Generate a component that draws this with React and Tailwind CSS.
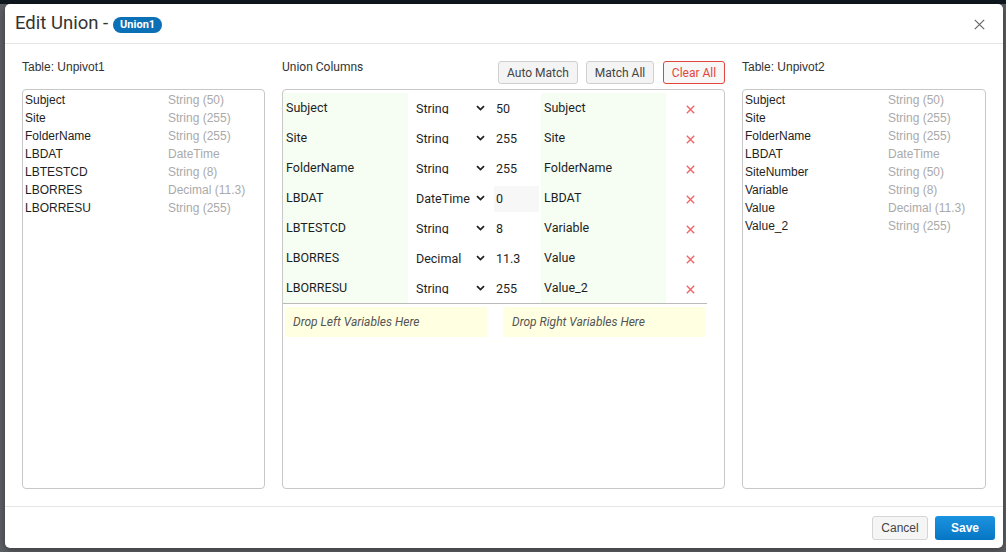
import { useState } from "react";

const leftCols = [
  ["Subject", "String (50)"],
  ["Site", "String (255)"],
  ["FolderName", "String (255)"],
  ["LBDAT", "DateTime"],
  ["LBTESTCD", "String (8)"],
  ["LBORRES", "Decimal (11.3)"],
  ["LBORRESU", "String (255)"],
];

const rightCols = [
  ["Subject", "String (50)"],
  ["Site", "String (255)"],
  ["FolderName", "String (255)"],
  ["LBDAT", "DateTime"],
  ["SiteNumber", "String (50)"],
  ["Variable", "String (8)"],
  ["Value", "Decimal (11.3)"],
  ["Value_2", "String (255)"],
];

const unionRows = [
  { left: "Subject", type: "String", len: "50", right: "Subject" },
  { left: "Site", type: "String", len: "255", right: "Site" },
  { left: "FolderName", type: "String", len: "255", right: "FolderName" },
  { left: "LBDAT", type: "DateTime", len: "0", right: "LBDAT", locked: true },
  { left: "LBTESTCD", type: "String", len: "8", right: "Variable" },
  { left: "LBORRES", type: "Decimal", len: "11.3", right: "Value" },
  { left: "LBORRESU", type: "String", len: "255", right: "Value_2" },
];

const Chevron = () => (
  <svg width="9" height="6" viewBox="0 0 9 6" className="shrink-0">
    <path d="M1 1.2 L4.5 4.6 L8 1.2" fill="none" stroke="#222" strokeWidth="1.8" />
  </svg>
);

const RedX = () => (
  <svg width="9" height="9" viewBox="0 0 9 9">
    <path d="M0.8 0.8 L8.2 8.2 M8.2 0.8 L0.8 8.2" stroke="#f26565" strokeWidth="1.4" />
  </svg>
);

const TableList = ({ title, cols }) => {
  return (
    <div className="flex flex-col">
      <div className="h-[29px] text-[12px] leading-[14px] text-[#333]">{title}</div>
      <div className="h-[400px] border border-[#c8c8c8] rounded-[4px] pt-[1px] pl-[2px]">
        {cols.map(([name, type]) => (
          <div key={name} className="grid grid-cols-[143px_1fr] h-[18px] items-center text-[12px]">
            <span className="text-[#1f1f1f]">{name}</span>
            <span className="text-[#aaa]">{type}</span>
          </div>
        ))}
      </div>
    </div>
  );
};

export default function App() {
  const [rows, setRows] = useState(unionRows);

  return (
    <div className="relative w-[1006px] h-[552px] overflow-hidden bg-[#5d6064] font-['Liberation_Sans',Arial,sans-serif]">
      <div className="h-[4px] bg-[#0f1720]" />
      <div className="ml-[5px] w-[998px] h-[544px] bg-white rounded-[5px] shadow-[0_2px_8px_rgba(0,0,0,0.4)] flex flex-col">
        {/* header */}
        <div className="h-[40px] border-b border-[#e5e5e5] flex items-center pl-[10px] pr-[18px]">
          <span className="text-[18.5px] text-[#333] font-['Roboto',sans-serif] leading-none">Edit Union -</span>
          <span className="ml-[5px] mt-[3px] h-[16px] px-[7px] rounded-full bg-[#0b70b5] text-white text-[11px] font-bold flex items-center font-['Roboto',sans-serif]">
            Union1
          </span>
          <button className="ml-auto mt-[1px]">
            <svg width="11" height="11" viewBox="0 0 11 11">
              <path d="M0.8 0.8 L10.2 10.2 M10.2 0.8 L0.8 10.2" stroke="#666" strokeWidth="1.2" />
            </svg>
          </button>
        </div>

        {/* body */}
        <div className="flex gap-[17px] px-[17px] pt-[16px] pb-[17px] border-b border-[#e5e5e5]">
          <div className="w-[243px]">
            <TableList title="Table: Unpivot1" cols={leftCols} />
          </div>

          <div className="w-[443px] flex flex-col font-['Roboto',sans-serif]">
            <div className="h-[29px] flex items-start">
              <span className="text-[12px] leading-[14px] text-[#333]">Union Columns</span>
              <div className="ml-auto mt-[1px] flex gap-[8px]">
                <button className="h-[23px] w-[80px] rounded-[3px] border border-[#cfcfcf] bg-[#f4f4f4] text-[12px] text-[#444]">
                  Auto Match
                </button>
                <button className="h-[23px] w-[68px] rounded-[3px] border border-[#cfcfcf] bg-[#f4f4f4] text-[12px] text-[#444]">
                  Match All
                </button>
                <button
                  onClick={() => setRows([])}
                  className="ml-[1px] h-[23px] w-[62px] rounded-[3px] border border-[#e2463b] bg-[#f7f7f7] text-[12px] text-[#e2463b]"
                >
                  Clear All
                </button>
              </div>
            </div>
            <div className="h-[400px] border border-[#c8c8c8] rounded-[4px] pt-[3px]">
              <div className="w-[424px] border-b border-[#bbb]">
                {rows.map((r) => (
                  <div key={r.left} className="flex h-[30px] text-[12.5px] text-[#1f1f1f]">
                    <div className="w-[125px] bg-[#f6fdf3] pl-[3px] pt-[1px] flex items-center">{r.left}</div>
                    <div className="w-[82px] pl-[8px] pr-[5px] flex items-center">
                      <div className="h-[12px] overflow-hidden leading-[13px] flex-1">{r.type}</div>
                      <Chevron />
                    </div>
                    <div className="w-[51px] pl-[4px] pt-[3px] pb-[1px]">
                      <div className={`w-[45px] h-full pl-[2px] flex items-center ${r.locked ? "bg-[#f7f7f7]" : ""}`}>
                        {r.len}
                      </div>
                    </div>
                    <div className="w-[125px] bg-[#f6fdf3] pl-[3px] pt-[1px] flex items-center">{r.right}</div>
                    <div className="w-[41px] pl-[20px] pt-[2px] flex items-center">
                      <RedX />
                    </div>
                  </div>
                ))}
              </div>
              <div className="w-[424px] flex gap-[16px] px-[2px] mt-[3px] text-[12px] italic text-[#555]">
                <div className="w-[202px] h-[30px] bg-[#ffffe1] pl-[8px] flex items-center">Drop Left Variables Here</div>
                <div className="w-[202px] h-[30px] bg-[#ffffe1] pl-[9px] flex items-center">Drop Right Variables Here</div>
              </div>
            </div>
          </div>

          <div className="w-[244px]">
            <TableList title="Table: Unpivot2" cols={rightCols} />
          </div>
        </div>

        {/* footer */}
        <div className="flex justify-end gap-[7px] pt-[9px] pr-[8px]">
          <button className="h-[24px] w-[56px] rounded-[3px] border border-[#d5d5d5] bg-[#f5f5f5] text-[12px] text-[#444]">
            Cancel
          </button>
          <button className="h-[24px] w-[60px] rounded-[3px] bg-gradient-to-b from-[#1b93e0] to-[#0676c4] text-[12px] font-bold text-white">
            Save
          </button>
        </div>
      </div>
    </div>
  );
}
